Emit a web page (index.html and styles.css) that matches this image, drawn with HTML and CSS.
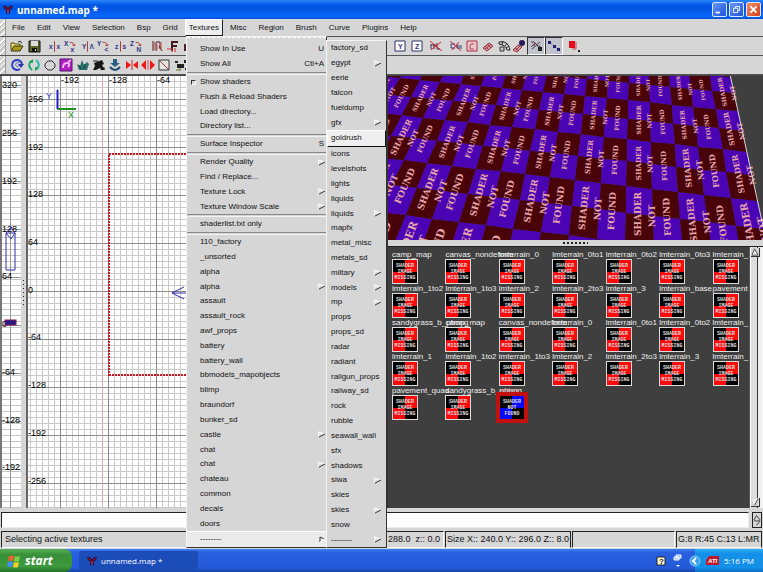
FILE: index.html
```html
<!DOCTYPE html>
<html lang="en">
<head>
<meta charset="utf-8">
<title>unnamed.map *</title>
<link rel="stylesheet" href="styles.css">
</head>
<body>
<svg class="defs" aria-hidden="true">
  <defs>
    <symbol id="logo" viewBox="0 0 14 14"><path d="M1 2h4l1 2h2l1-2h4l-2 4H9v6H8V7H6v5H5V6H3z" fill="#2a0a30"/><path d="M2 3l3 1 1 2h2l1-2 3-1-2 2-2 1v4H6V6L4 5z" fill="#d01828"/></symbol>
    <symbol id="missing" viewBox="0 0 24 23">
      <rect width="24" height="23" fill="#000"/><rect x="12" width="12" height="12" fill="#fa0a0a"/><rect y="12" width="12" height="11" fill="#fa0a0a"/>
      <g class="thumb-text"><text x="12" y="7">SHADER</text><text x="12" y="13">IMAGE</text><text x="12" y="19">MISSING</text></g>
    </symbol>
    <symbol id="notfound" viewBox="0 0 24 23">
      <rect width="24" height="23" fill="#000"/><rect x="12" width="12" height="12" fill="#0a0afa"/><rect y="12" width="12" height="11" fill="#0a0afa"/>
      <g class="thumb-text"><text x="12" y="7">SHADER</text><text x="12" y="13">NOT</text><text x="12" y="19">FOUND</text></g>
    </symbol>
    <symbol id="arrow" viewBox="0 0 8 7"><path d="M0 6V1l7 2z" fill="#e4e4e4"/><path d="M0 0v6M0 1l7 2" stroke="#fff" fill="none"/><path d="M1 6l6-3" stroke="#333" fill="none"/></symbol>
  </defs>
</svg>

<header class="titlebar">
  <svg class="app-icon"><use href="#logo"/></svg>
  <h1>unnamed.map *</h1>
  <div class="window-buttons">
    <button aria-label="Minimize"><svg viewBox="0 0 15 15"><path d="M3 11h5" stroke="#fff" stroke-width="2"/></svg></button>
    <button aria-label="Restore"><svg viewBox="0 0 15 15"><path d="M6 6V4h5v5H9M4 6h5v5H4z" stroke="#fff" fill="none"/></svg></button>
    <button class="close" aria-label="Close"><svg viewBox="0 0 15 15"><path d="M4 4l7 7M11 4l-7 7" stroke="#fff" stroke-width="2"/></svg></button>
  </div>
</header>

<nav class="menubar">
  <span class="grip"></span>
  <button>File</button><button>Edit</button><button>View</button><button>Selection</button><button>Bsp</button><button>Grid</button><button class="open">Textures</button><button>Misc</button><button>Region</button><button>Brush</button><button>Curve</button><button>Plugins</button><button>Help</button>
</nav>

<div class="toolbar">
  <span class="grip"></span>
  <div class="left-tools">
    <div class="tools two">
      <button aria-label="Open"><svg viewBox="0 0 14 14"><path d="M1 11V4h3l1 1h5v2" fill="#f0e070" stroke="#4a4a10"/><path d="M1 12l3-5h9l-3 5z" fill="#a89818" stroke="#3a3a10"/><path d="M8 3q2-2 4 1" stroke="#222" fill="none"/></svg></button>
      <button aria-label="Save"><svg viewBox="0 0 14 14"><path d="M2 2h11v11H2z" fill="#5c6428" stroke="#111"/><path d="M4 2h7v5H4z" fill="#ddd"/><path d="M5 9h5v4H5z" fill="#111"/><path d="M8 10h1v2H8z" fill="#ddd"/></svg></button>
    </div>
    <div class="tools six">
      <button aria-label="Flip X"><svg viewBox="0 0 16 14"><text x="2" y="10">x</text><text x="10" y="10">x</text><path d="M8 2v11" stroke="#b03030"/></svg></button>
      <button aria-label="Rotate X"><svg viewBox="0 0 16 14"><text x="1" y="7">X</text><text x="8" y="13">x</text><path d="M7 3q5 0 5 4l-2-1m2 1 1-2" stroke="#b03030" fill="none"/></svg></button>
      <button aria-label="Flip Y"><svg viewBox="0 0 16 14"><text x="2" y="10">Y</text><text x="10" y="10">&#923;</text><path d="M8 2v11" stroke="#b03030"/></svg></button>
      <button aria-label="Rotate Y"><svg viewBox="0 0 16 14"><text x="1" y="7">Y</text><text x="9" y="13">&lt;</text><path d="M7 3q5 0 5 4l-2-1m2 1 1-2" stroke="#b03030" fill="none"/></svg></button>
      <button aria-label="Flip Z"><svg viewBox="0 0 16 14"><text x="2" y="10">z</text><text x="10" y="10">s</text><path d="M8 2v11" stroke="#b03030"/></svg></button>
      <button aria-label="Rotate Z"><svg viewBox="0 0 16 14"><text x="1" y="7">Z</text><text x="8" y="13">N</text><path d="M7 3q5 0 5 4l-2-1m2 1 1-2" stroke="#b03030" fill="none"/></svg></button>
    </div>
    <div class="tools three">
      <button aria-label="Select complete tall"><svg viewBox="0 0 14 14"><path d="M3 2v10M6 12V3h4v7M9 7l3 5" stroke="#502028" fill="none"/><path d="M4 3v8M7 5v6M11 3v8" stroke="#c04848" fill="none"/></svg></button>
      <button aria-label="Select touching"><svg viewBox="0 0 14 14"><path d="M6 12V3h6M6 7h5" stroke="#401820" stroke-width="2" fill="none"/><path d="M1 10h5v3M9 9v4" stroke="#d03030" fill="none"/></svg></button>
      <button aria-label="Select inside"><svg viewBox="0 0 14 14"><path d="M2 12V6h4V2h6" stroke="#502028" fill="none" stroke-width="2"/></svg></button>
    </div>
  </div>
  <div class="tools two">
    <button aria-label="Scale Y"><svg viewBox="0 0 14 14"><path d="M2 2h10v10H2z" fill="#fff" stroke="#30306a"/><text x="5" y="10">Y</text></svg></button>
    <button aria-label="Scale Z"><svg viewBox="0 0 14 14"><path d="M2 2h10v10H2z" fill="#fff" stroke="#30306a"/><text x="5" y="10">Z</text></svg></button>
  </div>
  <div class="tools one">
    <button aria-label="Hide models"><svg viewBox="0 0 14 14"><path d="M2 5v5M5 5v5M8 4v6h3M2 6h5" stroke="#403050" fill="none"/><path d="M1 2l12 10M12 3L2 11" stroke="#d82030"/></svg></button>
  </div>
  <div class="tools seven">
    <button aria-label="Hide curves"><svg viewBox="0 0 14 14"><path d="M6 5H2v4h4M8 5v4h5M8 7h5" stroke="#304070" fill="none"/><path d="M1 2l11 10M10 3L3 11" stroke="#d82030"/></svg></button>
    <button aria-label="Cap patch"><svg viewBox="0 0 14 14"><path d="M2 2h10v10H2z" fill="#eec8c8" stroke="#a83040"/><path d="M9 5H6L5 7v3h4" stroke="#b04050" fill="none"/></svg></button>
    <button aria-label="Patch mesh"><svg viewBox="0 0 14 14"><path d="M2 9l6-5 4 3-6 5z" fill="#dca0a0" stroke="#903040"/><path d="M4 7l4 4M6 5l4 4M4 10l6-5" stroke="#903040"/></svg></button>
    <button aria-label="Patch bend"><svg viewBox="0 0 14 14"><path d="M2 3q9-2 11 8h-3Q9 6 2 5z" fill="#ddd" stroke="#222"/><path d="M6 2l-1 4M10 4L8 7M12 7l-3 2" stroke="#222"/><path d="M3 8h4v4H3z" fill="#ccc" stroke="#333"/></svg></button>
    <button aria-label="Patch wireframe"><svg viewBox="0 0 14 14"><path d="M1 11l5-5 4 2-5 5z" fill="#dca0a0" stroke="#903040"/><path d="M3 9l4 3M4 11l4-4" stroke="#903040"/><circle cx="10" cy="4" r="3" fill="#281858"/></svg></button>
    <button class="pressed" aria-label="Popup selection"><svg viewBox="0 0 14 14"><path d="M2 3h3l4 4M2 8l4-4M3 10l8-7M8 7h3v4" stroke="#444" fill="none"/><path d="M9 8h4v4H9z" fill="#222"/><path d="M4 5h2v2H4z" fill="#a05060"/></svg></button>
    <button class="pressed" aria-label="Vertex mode"><svg viewBox="0 0 14 14"><path d="M2 3l10 8" stroke="#888"/><path d="M1 2h3v3H1zM6 6h3v3H6zM10 9h3v3h-3z" fill="#20207a"/></svg></button>
  </div>
  <div class="tools one last">
    <button aria-label="Texture view"><svg viewBox="0 0 14 14"><path d="M2 2h6v7H2z" fill="#e80818"/><path d="M9 3v7H5" stroke="#c04050" fill="none"/><path d="M11 11h2v2h-2z" fill="#222"/></svg></button>
  </div>
</div>

<div class="toolbar">
  <span class="grip"></span>
  <div class="tools eleven">
    <button aria-label="Refresh"><svg viewBox="0 0 14 14"><path d="M10 11A5 5 0 1 1 12 6" stroke="#2a3ec0" stroke-width="2" fill="none"/><path d="M9 8A2 2 0 1 1 9 5" stroke="#5060c8" fill="none"/><path d="M8 6h6l-3 4z" fill="#2030a8"/></svg></button>
    <button aria-label="Reload"><svg viewBox="0 0 14 14"><path d="M5 12Q0 8 4 3" stroke="#18a070" stroke-width="2" fill="none"/><path d="M9 2q5 4 1 9" stroke="#20b8b0" stroke-width="2" fill="none"/><path d="M2 4l4-3v4zM12 10l-4 3V9z" fill="#18a050"/></svg></button>
    <button aria-label="Polygon"><svg viewBox="0 0 14 14"><path d="M5 3h4l3 3v3l-3 3H5L2 9V6z" fill="none" stroke="#333"/></svg></button>
    <button aria-label="Texture tool"><svg viewBox="0 0 14 14"><path d="M1 1h12v12H1z" fill="#b020c0" stroke="#501070"/><path d="M4 10q0-5 4-5t1 4M9 4l3-2" stroke="#f0b8f8" stroke-width="2" fill="none"/></svg></button>
    <button aria-label="Terrain"><svg viewBox="0 0 14 14"><path d="M1 6l3 2 2-6 2 5 3-3 2 2-2 6H3z" fill="#28706a"/><path d="M3 7l2 4M9 6l-1 5" stroke="#154040"/></svg></button>
    <button aria-label="Tank"><svg viewBox="0 0 14 14"><path d="M2 5l8-3 2 4-2 1 3 5H9l-1-2-4 2H1l2-4z" fill="#181818"/><path d="M1 3h5M9 10h4" stroke="#222"/></svg></button>
    <button aria-label="Drop entity"><svg viewBox="0 0 14 14"><path d="M5 1h4v4h3L7 9 2 5h3z" fill="#286080"/><path d="M2 9q5 6 10 0" stroke="#204870" stroke-width="2" fill="none"/></svg></button>
    <button aria-label="Merge"><svg viewBox="0 0 14 14"><path d="M1 3l5 4-5 4zM13 3L8 7l5 4z" fill="#f01818"/><path d="M7 2v10" stroke="#e02020"/></svg></button>
    <button aria-label="Split"><svg viewBox="0 0 14 14"><path d="M5 2v10L0 7zM9 2v10l5-5z" fill="#f01818"/><path d="M7 2v10" stroke="#e05050"/></svg></button>
    <button aria-label="Clip"><svg viewBox="0 0 14 14"><path d="M2 2h10v10H2z" fill="#e4e4e4" stroke="#333"/><path d="M2 2l10 10" stroke="#a03030"/></svg></button>
    <button aria-label="Camera"><svg viewBox="0 0 14 14"><path d="M1 3h3v2H1zM3 6h7v4H3zM10 2h2v3h-2zM11 10h3v2h-3z" fill="#222"/><path d="M6 10v3M2 12h4" stroke="#687028"/></svg></button>
  </div>
</div>

<main class="workspace">
  <svg class="z-view" aria-label="Z view">
    <defs><pattern id="zgrid" width="20" height="6" y="5" patternUnits="userSpaceOnUse"><path d="M0 0h20v1H0z" fill="#c6c6c6"/></pattern>
    <pattern id="zmajor" width="20" height="48" y="9" patternUnits="userSpaceOnUse"><path d="M0 0h20v1H0z" fill="#969696"/></pattern></defs>
    <rect width="100%" height="100%" fill="url(#zgrid)"/><rect width="100%" height="100%" fill="url(#zmajor)"/>
    <path d="M8 0h1v440H8z" fill="#999"/>
    <g class="axis"><text x="0" y="12">320</text><text x="0" y="60">256</text><text x="0" y="108">192</text><text x="0" y="156">128</text><text x="0" y="203">64</text><text x="0" y="251">0</text><text x="0" y="299">-64</text><text x="0" y="347">-128</text><text x="0" y="394">-192</text></g>
    <path d="M4 157h9v37H4zM4 157l5-6 4 6-4 6z" fill="none" stroke="#3030a8"/>
    <rect x="3" y="244" width="11" height="5" fill="#241888" stroke="#801850"/>
  </svg>
  <div class="v-splitter"><span class="dots"></span></div>
  <svg class="xy-view" aria-label="XY view">
    <defs><pattern id="xgrid" width="6" height="6" x="2" y="5" patternUnits="userSpaceOnUse"><path d="M0 0h6v1H1v5H0z" fill="#c9c9c9"/></pattern>
    <pattern id="xmajor" width="48" height="48" x="32" y="23" patternUnits="userSpaceOnUse"><path d="M0 0h48v1H1v47H0z" fill="#8c8c8c"/></pattern></defs>
    <rect width="100%" height="100%" fill="url(#xgrid)"/><rect width="100%" height="100%" fill="url(#xmajor)"/>
    <path d="M74 0h1v440h-1z" fill="#dcaaaa"/>
    <g class="axis"><text x="33" y="7">-192</text><text x="81" y="7">-128</text><text x="129" y="7">-64</text>
    <text x="0" y="26">256</text><text x="0" y="74">192</text><text x="0" y="121">128</text><text x="0" y="169">64</text><text x="0" y="217">0</text><text x="0" y="264">-64</text><text x="0" y="312">-128</text><text x="0" y="360">-192</text><text x="0" y="408">-256</text></g>
    <path d="M29 14h1v19h-1z" fill="#2020d0" stroke="#2020d0"/><path d="M30 33h18" stroke="#209020" stroke-width="2"/>
    <g class="axis"><text x="18" y="23" fill="#4040c0">Y</text><text x="40" y="42" fill="#209020">X</text></g>
    <path d="M81 300V78H240M81 299H240" fill="none" stroke="#c81828" stroke-width="2" stroke-dasharray="2 1"/>
    <path d="M144 217h20M144 217l12-6M144 217l12 6" fill="none" stroke="#3030a8"/>
  </svg>
  <div class="right-panes">
    <svg class="camera" id="camera" aria-label="Camera view"></svg>
    <div class="h-splitter"><span class="dots"></span></div>
    <section class="textures">
      <div class="texture-scroll">
        <div class="texture-grid">
          <figure><figcaption>camp_map</figcaption><svg><use href="#missing"/></svg></figure>
          <figure><figcaption>canvas_nondeform</figcaption><svg><use href="#missing"/></svg></figure>
          <figure><figcaption>lmterrain_0</figcaption><svg><use href="#missing"/></svg></figure>
          <figure><figcaption>lmterrain_0to1</figcaption><svg><use href="#missing"/></svg></figure>
          <figure><figcaption>lmterrain_0to2</figcaption><svg><use href="#missing"/></svg></figure>
          <figure><figcaption>lmterrain_0to3</figcaption><svg><use href="#missing"/></svg></figure>
          <figure><figcaption>lmterrain_1</figcaption><svg><use href="#missing"/></svg></figure>
          <figure><figcaption>lmterrain_1to2</figcaption><svg><use href="#missing"/></svg></figure>
          <figure><figcaption>lmterrain_1to3</figcaption><svg><use href="#missing"/></svg></figure>
          <figure><figcaption>lmterrain_2</figcaption><svg><use href="#missing"/></svg></figure>
          <figure><figcaption>lmterrain_2to3</figcaption><svg><use href="#missing"/></svg></figure>
          <figure><figcaption>lmterrain_3</figcaption><svg><use href="#missing"/></svg></figure>
          <figure><figcaption>lmterrain_base</figcaption><svg><use href="#missing"/></svg></figure>
          <figure><figcaption>pavement</figcaption><svg><use href="#missing"/></svg></figure>
          <figure><figcaption>sandygrass_b_phong</figcaption><svg><use href="#missing"/></svg></figure>
          <figure><figcaption>camp_map</figcaption><svg><use href="#missing"/></svg></figure>
          <figure><figcaption>canvas_nondeform</figcaption><svg><use href="#missing"/></svg></figure>
          <figure><figcaption>lmterrain_0</figcaption><svg><use href="#missing"/></svg></figure>
          <figure><figcaption>lmterrain_0to1</figcaption><svg><use href="#missing"/></svg></figure>
          <figure><figcaption>lmterrain_0to2</figcaption><svg><use href="#missing"/></svg></figure>
          <figure><figcaption>lmterrain_</figcaption><svg><use href="#missing"/></svg></figure>
          <figure><figcaption>lmterrain_1</figcaption><svg><use href="#missing"/></svg></figure>
          <figure><figcaption>lmterrain_1to2</figcaption><svg><use href="#missing"/></svg></figure>
          <figure><figcaption>lmterrain_1to3</figcaption><svg><use href="#missing"/></svg></figure>
          <figure><figcaption>lmterrain_2</figcaption><svg><use href="#missing"/></svg></figure>
          <figure><figcaption>lmterrain_2to3</figcaption><svg><use href="#missing"/></svg></figure>
          <figure><figcaption>lmterrain_3</figcaption><svg><use href="#missing"/></svg></figure>
          <figure><figcaption>lmterrain_</figcaption><svg><use href="#missing"/></svg></figure>
          <figure><figcaption>pavement_quad</figcaption><svg><use href="#missing"/></svg></figure>
          <figure><figcaption>sandygrass_b_phong</figcaption><svg><use href="#missing"/></svg></figure>
          <figure class="selected"><figcaption>notex</figcaption><svg><use href="#notfound"/></svg></figure>
        </div>
      </div>
      <div class="scrollbar"><button aria-label="Scroll up"><svg viewBox="0 0 9 9"><path d="M1 8l3-7 4 7z" fill="#eee" stroke="#444"/></svg></button><button aria-label="Scroll down"><svg viewBox="0 0 9 9"><path d="M1 1h7L4 8z" fill="#eee"/><path d="M8 1L4 8" stroke="#444"/></svg></button></div>
    </section>
  </div>
</main>

<div class="console">
  <textarea aria-label="Console" rows="1" readonly></textarea>
  <div class="console-scroll"><svg viewBox="0 0 9 14"><path d="M1 7l3-5 4 5M1 8h7L4 13" fill="none" stroke="#333"/></svg></div>
</div>

<footer class="statusbar">
  <span class="cell message">Selecting active textures</span>
  <span class="cell position">x:: 240.0 y:: 288.0&nbsp; z:: 0.0</span>
  <span class="cell size">Size X:: 240.0 Y:: 296.0 Z:: 8.0</span>
  <span class="cell blank"></span>
  <span class="cell grid-info">G:8 R:45 C:13 L:MR</span>
</footer>

<div class="taskbar">
  <button class="start"><svg viewBox="0 0 14 14"><path d="M2 2q3-1 5 0L6 7Q3 6 1 7z" fill="#f06030"/><path d="M8 2q2 1 5 0l-1 5q-3 1-5 0z" fill="#80d040"/><path d="M1 8q3-1 5 0l-1 5q-2-1-5 0z" fill="#4090f8"/><path d="M7 8q2 1 5 0l-1 5q-3 1-5 0z" fill="#f8d030"/></svg>start</button>
  <button class="task"><svg><use href="#logo"/></svg>unnamed.map *</button>
  <div class="language">
    <svg viewBox="0 0 10 10"><path d="M1 1h8v8H1z" fill="#fffbd8" stroke="#222"/><text x="3" y="8" class="help-mark">?</text></svg>
    <svg class="restore" viewBox="0 0 10 14"><path d="M3 1h5v3H3zM1 3h5v3H1z" fill="#8cb4f8" stroke="#fff"/><path d="M3 11h4l-2 2z" fill="#fff"/></svg>
  </div>
  <div class="tray">
    <svg class="chevron" viewBox="0 0 12 12"><circle cx="6" cy="6" r="5" fill="#38a0f0" stroke="#90d0ff"/><path d="M7 3L4 6l3 3" fill="none" stroke="#fff" stroke-width="2"/></svg>
    <svg class="ati" viewBox="0 0 13 11"><path d="M3 1h10v9H0V5z" fill="#c01828"/><text x="2" y="8">ATI</text></svg>
    <time>5:16 PM</time>
  </div>
</div>

<ul class="menu textures-menu">
  <li class="tearoff"></li>
  <li><button>Show In Use<kbd>U</kbd></button></li>
  <li><button>Show All<kbd>Ctl+A</kbd></button></li>
  <li class="rule"></li>
  <li class="check"><button>Show shaders</button></li>
  <li><button>Flush &amp; Reload Shaders</button></li>
  <li><button>Load directory...</button></li>
  <li><button>Directory list...</button></li>
  <li class="rule"></li>
  <li><button>Surface Inspector<kbd>S</kbd></button></li>
  <li class="rule"></li>
  <li><button>Render Quality<svg><use href="#arrow"/></svg></button></li>
  <li><button>Find / Replace...</button></li>
  <li><button>Texture Lock<svg><use href="#arrow"/></svg></button></li>
  <li><button>Texture Window Scale<svg><use href="#arrow"/></svg></button></li>
  <li class="rule"></li>
  <li><button>shaderlist.txt only</button></li>
  <li class="rule"></li>
  <li><button>110_factory</button></li>
  <li><button>_unsorted</button></li>
  <li><button>alpha</button></li>
  <li><button>alpha<svg><use href="#arrow"/></svg></button></li>
  <li><button>assault</button></li>
  <li><button>assault_rock</button></li>
  <li><button>awf_props</button></li>
  <li><button>battery</button></li>
  <li><button>battery_wall</button></li>
  <li><button>bbmodels_mapobjects</button></li>
  <li><button>blimp</button></li>
  <li><button>braundorf</button></li>
  <li><button>bunker_sd</button></li>
  <li><button>castle<svg><use href="#arrow"/></svg></button></li>
  <li><button>chat</button></li>
  <li><button>chat<svg><use href="#arrow"/></svg></button></li>
  <li><button>chateau</button></li>
  <li><button>common</button></li>
  <li><button>decals</button></li>
  <li><button>doors</button></li>
  <li class="active"><button>--------<svg viewBox="0 0 8 7"><path d="M2 6V1l4 2" fill="none" stroke="#333"/><path d="M2 6l4-3" stroke="#fff"/></svg></button></li>
</ul>

<ul class="menu sub-menu">
  <li><button>factory_sd</button></li>
  <li><button>egypt<svg><use href="#arrow"/></svg></button></li>
  <li><button>eerie</button></li>
  <li><button>falcon</button></li>
  <li><button>fueldump</button></li>
  <li><button>gfx<svg><use href="#arrow"/></svg></button></li>
  <li class="hot"><button>goldrush</button></li>
  <li><button>icons</button></li>
  <li><button>levelshots</button></li>
  <li><button>lights</button></li>
  <li><button>liquids</button></li>
  <li><button>liquids<svg><use href="#arrow"/></svg></button></li>
  <li><button>mapfx</button></li>
  <li><button>metal_misc</button></li>
  <li><button>metals_sd</button></li>
  <li><button>miltary<svg><use href="#arrow"/></svg></button></li>
  <li><button>models<svg><use href="#arrow"/></svg></button></li>
  <li><button>mp<svg><use href="#arrow"/></svg></button></li>
  <li><button>props</button></li>
  <li><button>props_sd</button></li>
  <li><button>radar</button></li>
  <li><button>radiant</button></li>
  <li><button>railgun_props</button></li>
  <li><button>railway_sd</button></li>
  <li><button>rock</button></li>
  <li><button>rubble</button></li>
  <li><button>seawall_wall</button></li>
  <li><button>sfx</button></li>
  <li><button>shadows</button></li>
  <li><button>siwa<svg><use href="#arrow"/></svg></button></li>
  <li><button>skies</button></li>
  <li><button>skies<svg><use href="#arrow"/></svg></button></li>
  <li><button>snow</button></li>
  <li><button>--------<svg><use href="#arrow"/></svg></button></li>
</ul>
<script src="camera.js"></script>
</body>
</html>
```
FILE: styles.css
```css
*, *::before { box-sizing: border-box; }
html, body { height: 100%; }
body {
  margin: 0;
  display: flex;
  flex-direction: column;
  overflow: hidden;
  position: relative;
  background: #d6d6d6;
  color: #111;
  font: 8px/10px "Liberation Sans", Arial, sans-serif;
}
button {
  font: inherit;
  color: inherit;
  background: none;
  border: 0;
  padding: 0;
  margin: 0;
}
.defs { position: absolute; width: 0; height: 0; }

.titlebar {
  flex: 0 0 19px;
  display: flex;
  align-items: center;
  padding: 0 2px;
  background: linear-gradient(#2a86f8, #0458e8 25%, #0456e4 50%, #0668fc 85%, #0450d0);
}
.app-icon { width: 12px; height: 12px; }
.titlebar h1 {
  flex: 1;
  margin: 0 3px;
  color: #fff;
  font: bold 10px/14px "Open Sans", sans-serif;
}
.window-buttons { display: flex; gap: 2px; }
.window-buttons button {
  width: 15px;
  height: 15px;
  border: 1px solid #dce8ff;
  border-radius: 2px;
  background: linear-gradient(135deg, #6898f8, #1c50d8);
}
.window-buttons .close { background: linear-gradient(135deg, #f09070, #d83c10); }
.window-buttons svg { display: block; width: 13px; height: 13px; }

.grip {
  flex: 0 0 6px;
  margin-right: 3px;
  border-right: 1px solid #999;
  background: repeating-linear-gradient(135deg, #fff 0 1px, #bbb 1px 2px, #d6d6d6 2px 4px);
}
.menubar {
  flex: 0 0 18px;
  display: flex;
  border-bottom: 1px solid #555;
}
.menubar .grip { margin-right: 0; }
.menubar button { padding: 0 5px; border: 1px solid transparent; }
.menubar .open { background: #efefef; border-color: #fff #222 #222 #fff; padding: 0 3px; margin: 0 1px; }

.toolbar {
  flex: 0 0 19px;
  display: flex;
  border-bottom: 1px solid #555;
}
.left-tools { display: flex; gap: 4px; flex: 0 0 383px; }
.tools { display: flex; }
.tools button {
  flex: 1;
  display: flex;
  align-items: center;
  justify-content: center;
}
.tools svg { width: 14px; height: 14px; }
.tools text { font: bold 7px "Liberation Sans", sans-serif; fill: #30308a; }
.tools .pressed { background: #c2c2cc; border: 1px solid; border-color: #333 #fff #fff #333; }
.one { width: 16px; margin: 0 4px 0 3px; }
.two { width: 33px; }
.three { width: 49px; }
.six { width: 99px; }
.six svg { width: 15px; }
.seven { width: 115px; }
.eleven { width: 180px; }

.workspace { flex: 1; min-height: 0; display: flex; border-top: 1px solid #444; }
.z-view { flex: 0 0 21px; background: #fff; border-left: 2px solid #777; }
.z-view, .xy-view { height: 100%; }
.axis { font: 9px "Liberation Sans", sans-serif; }
.v-splitter { flex: 0 0 5px; display: flex; align-items: center; justify-content: center; }
.v-splitter .dots { width: 1px; height: 25px; background: repeating-linear-gradient(#222 0 1px, transparent 1px 4px); }
.xy-view { flex: 1; min-width: 0; background: #fff; border-left: 2px solid #666; }
.right-panes { flex: 0 0 377px; min-width: 0; display: flex; flex-direction: column; border-left: 2px solid #333; }
.camera { flex: 0 0 164px; width: 100%; background: #3f3f3f; }
.camera text { font-family: "DejaVu Serif", serif; font-weight: bold; fill: #e8a4ac; text-anchor: middle; dominant-baseline: central; }
.h-splitter { flex: 0 0 6px; display: flex; align-items: center; justify-content: center; }
.h-splitter .dots { width: 25px; height: 2px; background: repeating-linear-gradient(90deg, #222 0 2px, transparent 2px 4px); }
.textures { flex: 1; min-height: 0; display: flex; border-top: 1px solid #222; }
.texture-scroll { flex: 1; min-width: 0; overflow: hidden; background: #3f3f3f; }
.texture-grid {
  display: grid;
  grid-template-columns: repeat(7, 1fr);
  grid-auto-rows: 34px;
  padding: 3px 0 0 4px;
  margin-right: -17px;
}
figure { margin: 0; min-width: 0; }
figcaption { color: #f0f0f0; line-height: 9px; white-space: nowrap; }
figure svg { display: block; width: 26px; height: 25px; border: 1px solid #ddd; }
.thumb-text { font: bold 5px "Liberation Mono", monospace; fill: #ddd; text-anchor: middle; }
.selected svg { outline: 3px solid #c01010; border-color: #c01010; }
.selected figcaption { color: #f0a0a0; }
.scrollbar {
  flex: 0 0 12px;
  display: flex;
  flex-direction: column;
  justify-content: space-between;
  padding: 1px;
  background: linear-gradient(90deg, #fff 0 1px, #ddd 1px 7px, #333 7px 8px, #eee 8px);
  border-left: 1px solid #555;
  border-right: 2px solid #f4f4f4;
}
.scrollbar button { height: 9px; display: flex; border-right: 1px solid #333; border-bottom: 1px solid #333; background: #d6d6d6; }
.scrollbar svg { width: 8px; height: 8px; }

.console { flex: 0 0 20px; min-height: 0; display: flex; gap: 3px; padding: 4px 1px 0; }
.console textarea {
  flex: 1;
  height: 16px;
  resize: none;
  margin: 0;
  padding: 0;
  border: 1px solid;
  border-color: #222 #eee #eee #222;
  background: #fff;
  overflow: hidden;
}
.console-scroll { width: 10px; height: 16px; border: 1px solid #222; }
.console-scroll svg { display: block; width: 8px; height: 14px; }

.statusbar { flex: 0 0 21px; display: flex; gap: 1px; padding: 3px 1px 1px; font-size: 9px; }
.cell { border: 1px solid; border-color: #222 #fff #fff #222; padding: 0 3px; line-height: 15px; white-space: nowrap; overflow: hidden; }
.message { flex: 1; }
.position { width: 126px; text-align: right; }
.size { width: 126px; padding: 0 1px; border-right-color: #222; }
.blank { width: 103px; }
.grid-info { width: 86px; padding: 0 1px; border-right-color: #222; }

.taskbar {
  flex: 0 0 23px;
  display: flex;
  align-items: stretch;
  color: #fff;
  background: linear-gradient(#3c80f0, #2860e0 15%, #245ada 80%, #1a44a8);
}
.start {
  width: 72px;
  display: flex;
  align-items: center;
  padding-left: 7px;
  gap: 4px;
  border-radius: 0 8px 8px 0;
  background: linear-gradient(#58b058, #389038 25%, #3c9a3c 75%, #287028);
  font: italic bold 12px/14px "Open Sans", sans-serif;
}
.start svg { width: 14px; height: 14px; }
.task {
  width: 119px;
  margin: 2px 0 1px 7px;
  display: flex;
  align-items: center;
  gap: 3px;
  padding-left: 7px;
  border-radius: 2px;
  background: #1c4cb8;
  font: 8px/10px "Open Sans", sans-serif;
}
.task svg { width: 12px; height: 13px; }
.language { margin-left: auto; display: flex; gap: 7px; align-items: center; padding-right: 12px; }
.language svg { width: 10px; height: 10px; }
.language .restore { height: 14px; }
.help-mark { font: bold 8px "Liberation Sans", sans-serif; fill: #222; }
.tray {
  width: 68px;
  display: flex;
  align-items: center;
  gap: 5px;
  background: linear-gradient(#30b0f8, #1490e8 20%, #1290e8 80%, #0c70c0);
  font: 8px/10px "Open Sans", sans-serif;
}
.chevron { width: 12px; height: 12px; margin-left: -6px; }
.ati { width: 13px; height: 11px; }
.ati text { font: italic bold 6px "Liberation Sans", sans-serif; fill: #fff; }

.menu {
  position: absolute;
  bottom: 24px;
  margin: 0;
  padding: 0;
  list-style: none;
  display: flex;
  flex-direction: column;
  background: #d6d6d6;
  border: 1px solid;
  border-color: #f4f4f4 #333 #333 #f4f4f4;
}
.menu li { flex: 1; min-height: 0; display: flex; }
.menu button {
  flex: 1;
  display: flex;
  align-items: center;
  justify-content: space-between;
  text-align: left;
}
.menu svg { width: 8px; height: 7px; }
.menu kbd { font: inherit; padding-right: 2px; }
.textures-menu { left: 186px; top: 36px; width: 141px; }
.textures-menu button { padding-left: 13px; }
.menu .tearoff { flex: 0 0 5px; border-top: 1px dashed #fff; }
.menu .rule { flex: 0 0 3px; border-top: 1px solid #888; border-bottom: 1px solid #f4f4f4; background: #d6d6d6; }
.textures-menu .check button { padding-left: 0; justify-content: flex-start; }
.check button::before {
  content: "";
  width: 5px;
  height: 5px;
  margin: 0 4px;
  border: 1px solid;
  border-color: #333 #fff #fff #333;
}
.menu .active { background: #eaeaea; border-top: 1px solid #fff; }
.sub-menu { left: 326px; top: 40px; width: 61px; }
.sub-menu button { padding: 0 4px; }
.menu .hot { background: #efefef; border: 1px solid; border-color: #fff #111 #111 #fff; }
.hot button { padding: 0 3px; }
```
FILE: camera.js
```js
// Perspective view of the checkered floor: (u, v) are tile coordinates on the plane.
const svg = document.getElementById("camera");
const NS = "http://www.w3.org/2000/svg";
const EDGE = 2.28;

function project(u, v) {
  const w = 1 - 0.0088 * u + 0.1016 * v;
  return [
    (758 + 155.9 * u + 77 * v) / w / 3 - 3,
    (432 + 15.4 * u - 125.8 * v) / w / 3 - 6
  ];
}

function add(name, attrs, text) {
  const node = document.createElementNS(NS, name);
  for (const key in attrs) node.setAttribute(key, attrs[key]);
  if (text) node.textContent = text;
  svg.appendChild(node);
}

function cell(u0, v0, color) {
  const points = [[u0, v0], [u0 + 0.5, v0], [u0 + 0.5, v0 + 0.5], [u0, v0 + 0.5]]
    .map(([u, v]) => project(u, v).map(Math.round).join(","))
    .join(" ");
  add("polygon", { points, fill: color });
}

const columns = [];
for (let u = -8; u <= 2; u++) columns.push(u);

for (const u of columns) {
  for (let v = -1; v <= 4; v++) {
    cell(u - 0.22, v, "#4a04b4");
    cell(u - 0.22, v - 0.5, "#480408");
    if (u < 2) {
      cell(u + 0.28, v, "#480408");
      cell(u + 0.28, v - 0.5, "#4a04b4");
    }
  }
}

for (const u of columns) {
  for (let v = -1; v <= 4; v++) {
    [["SHADER", 0], ["NOT", 0.26], ["FOUND", 0.53]].forEach(([word, offset]) => {
      if (u + offset > EDGE - 0.02) return;
      const [x, y] = project(u + offset, v);
      if (x < -20 || x > 400 || y < -20 || y > 184) return;
      const [x2, y2] = project(u + offset, v + 0.1);
      const length = Math.hypot(x2 - x, y2 - y) * 10;
      const angle = Math.round(Math.atan2(y2 - y, x2 - x) * 180 / Math.PI);
      add("text", {
        transform: `translate(${Math.round(x)} ${Math.round(y)}) rotate(${angle})`,
        "font-size": Math.round(length * 0.16)
      }, word);
    });
  }
}

const [ax, ay] = project(EDGE, -1);
const [bx, by] = project(EDGE, 4.5);
add("path", { d: `M${Math.round(ax)} ${Math.round(ay)}L${Math.round(bx)} ${Math.round(by)}`, stroke: "#d8d8d8", fill: "none" });
```
